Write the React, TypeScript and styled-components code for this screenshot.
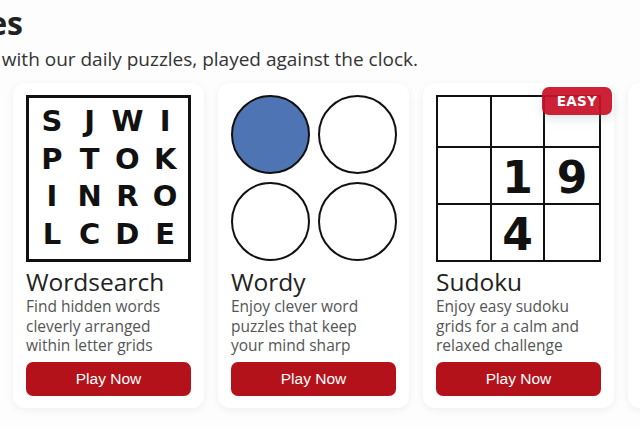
import * as React from 'react'
import styled, { createGlobalStyle } from 'styled-components'

const GlobalStyle = createGlobalStyle`
  html, body {
    margin: 0;
    padding: 0;
    background: #fdfdfd;
    overflow: hidden;
  }
  body {
    font-family: 'Open Sans', 'Noto Sans', sans-serif;
    color: #222;
  }
`

const Page = styled.div`
  width: 640px;
  height: 427px;
  overflow: hidden;
`

const Header = styled.header`
  padding-top: 3px;
`

// text is cut off on the left edge, so each line is right-aligned to a fixed edge
const HeaderLine = styled.div<{ $edge: number }>`
  display: flex;
  justify-content: flex-end;
  width: ${(p) => p.$edge}px;
  white-space: nowrap;
`

const Heading = styled.h1`
  margin: 0;
  font-size: 32px;
  line-height: 40px;
  font-weight: 700;
  color: #222;
`

const Subtitle = styled.p`
  margin: 3px 0 0;
  font-size: 19px;
  line-height: 26px;
  color: #333;
`

const CardRow = styled.div`
  display: flex;
  gap: 14px;
  padding: 11px 0 0 13px;
`

const Card = styled.div`
  position: relative;
  flex: 0 0 191px;
  box-sizing: border-box;
  height: 325px;
  display: flex;
  flex-direction: column;
  padding: 12px 13px 11px;
  background: #fff;
  border-radius: 12px;
  box-shadow: 0 2px 8px rgba(0, 0, 0, 0.06);
`

const Art = styled.div`
  width: 165px;
  height: 167px;
  box-sizing: border-box;
`

const LetterGrid = styled(Art)`
  border: 3px solid #111;
  display: grid;
  grid-template-columns: repeat(4, 1fr);
  grid-template-rows: repeat(4, 1fr);
  padding: 4px 4px 6px;
`

const Letter = styled.span`
  display: flex;
  align-items: center;
  justify-content: center;
  font-family: 'DejaVu Sans', sans-serif;
  font-weight: 700;
  font-size: 29px;
  color: #111;
`

const CircleGrid = styled(Art)`
  display: grid;
  grid-template-columns: repeat(2, 79px);
  grid-template-rows: repeat(2, 79px);
  gap: 8px;
  align-content: start;
`

const Circle = styled.div<{ $filled?: boolean }>`
  border: 2px solid #111;
  border-radius: 50%;
  background: ${(p) => (p.$filled ? '#4f74b3' : '#fff')};
`

const SudokuGrid = styled(Art)`
  border: 2px solid #111;
  display: grid;
  grid-template-columns: repeat(3, 1fr);
  grid-template-rows: repeat(3, 1fr);
`

const Cell = styled.div<{ $right?: boolean; $bottom?: boolean }>`
  display: flex;
  align-items: center;
  justify-content: center;
  border-right: ${(p) => (p.$right ? '2px solid #111' : 'none')};
  border-bottom: ${(p) => (p.$bottom ? '2px solid #111' : 'none')};
  font-family: 'DejaVu Sans', sans-serif;
  font-weight: 700;
  font-size: 44px;
  color: #111;
  padding-top: 4px;
`

const Title = styled.h2`
  margin: 5px 0 0;
  font-size: 24.5px;
  line-height: 29px;
  font-weight: 500;
  color: #222;
`

const Description = styled.p`
  margin: 1px 0 0;
  padding-right: 5px;
  font-size: 15.5px;
  line-height: 19.5px;
  height: 58px;
  color: #555;
`

const PlayButton = styled.button`
  margin-top: 7px;
  height: 34px;
  width: 100%;
  border: none;
  border-radius: 7px;
  background: #b3121a;
  color: #fff;
  font-family: 'Liberation Sans', Arial, sans-serif;
  font-size: 15.5px;
  cursor: pointer;
`

const Badge = styled.span`
  position: absolute;
  top: 4px;
  right: 2px;
  width: 70px;
  height: 28px;
  display: flex;
  align-items: center;
  justify-content: center;
  border-radius: 7px;
  background: rgba(200, 16, 40, 0.93);
  color: #fff;
  font-family: 'DejaVu Sans', sans-serif;
  font-weight: 700;
  font-size: 13.5px;
  letter-spacing: 0.3px;
  box-shadow: 0 4px 10px rgba(120, 170, 160, 0.25);
`

const letters = ['SJWI', 'PTOK', 'INRO', 'LCDE']
const sudoku = ['', '', '', '', '1', '9', '', '4', '']

const games = [
  {
    title: 'Wordsearch',
    text: 'Find hidden words cleverly arranged within letter grids',
    art: (
      <LetterGrid>
        {letters.join('').split('').map((l, i) => (
          <Letter key={i}>{l}</Letter>
        ))}
      </LetterGrid>
    ),
  },
  {
    title: 'Wordy',
    text: 'Enjoy clever word puzzles that keep your mind sharp',
    art: (
      <CircleGrid>
        <Circle $filled />
        <Circle />
        <Circle />
        <Circle />
      </CircleGrid>
    ),
  },
  {
    title: 'Sudoku',
    text: 'Enjoy easy sudoku grids for a calm and relaxed challenge',
    badge: 'EASY',
    art: (
      <SudokuGrid>
        {sudoku.map((n, i) => (
          <Cell key={i} $right={i % 3 !== 2} $bottom={i < 6}>
            {n}
          </Cell>
        ))}
      </SudokuGrid>
    ),
  },
]

const App: React.FC = () => (
  <Page>
    <GlobalStyle />
    <Header>
      <HeaderLine $edge={23}>
        <Heading>Daily Games</Heading>
      </HeaderLine>
      <HeaderLine $edge={418}>
        <Subtitle>Challenge yourself with our daily puzzles, played against the clock.</Subtitle>
      </HeaderLine>
    </Header>
    <CardRow>
      {games.map((g) => (
        <Card key={g.title}>
          {g.art}
          {g.badge && <Badge>{g.badge}</Badge>}
          <Title>{g.title}</Title>
          <Description>{g.text}</Description>
          <PlayButton>Play Now</PlayButton>
        </Card>
      ))}
      <Card />
    </CardRow>
  </Page>
)

export default App
